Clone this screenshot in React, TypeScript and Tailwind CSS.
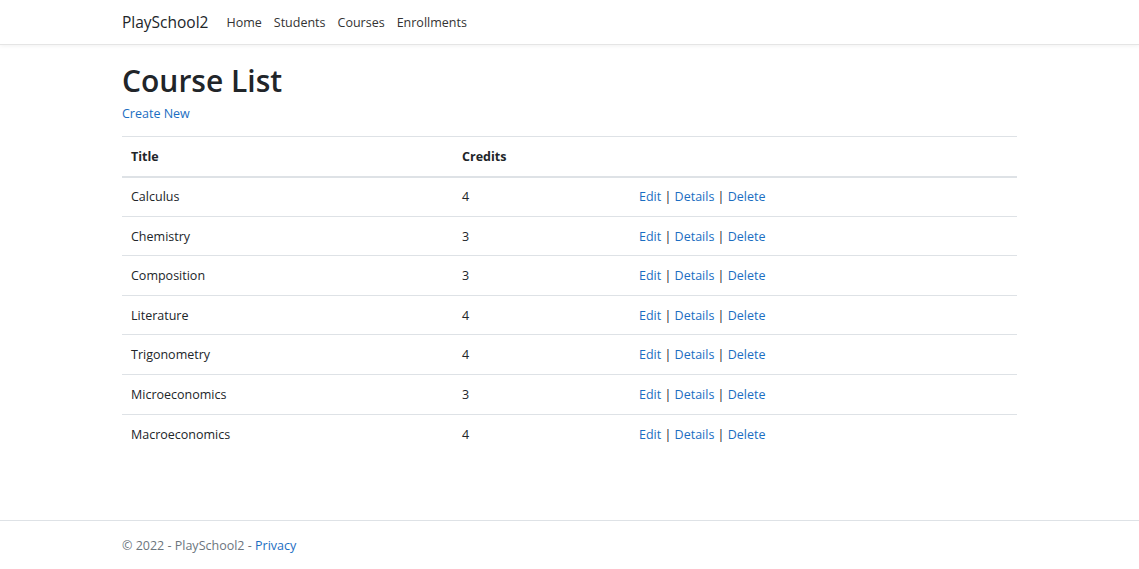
const courses = [
  { title: "Calculus", credits: 4 },
  { title: "Chemistry", credits: 3 },
  { title: "Composition", credits: 3 },
  { title: "Literature", credits: 4 },
  { title: "Trigonometry", credits: 4 },
  { title: "Microeconomics", credits: 3 },
  { title: "Macroeconomics", credits: 4 },
];

export default function App() {
  return (
    <div className="flex min-h-[569px] flex-col bg-white text-[12.5px] text-[#212529] [font-family:'Open_Sans',sans-serif]">
      <header className="h-[45px] border-b border-[#e5e5e5] shadow-[0_1px_4px_rgba(0,0,0,0.06)]">
        <nav className="mx-auto flex h-full w-[895px] items-center pt-[2px]">
          <a className="mr-[18px] text-[15.5px] text-[#212529]">PlaySchool2</a>
          <div className="flex gap-[12px] text-[12.5px] text-[#333]">
            <a>Home</a>
            <a>Students</a>
            <a>Courses</a>
            <a>Enrollments</a>
          </div>
        </nav>
      </header>

      <main className="mx-auto w-[895px] flex-1">
        <h1 className="mt-[17px] text-[30px] font-semibold leading-[38px] text-[#212529]">Course List</h1>
        <p className="mt-[5px] leading-[18px]">
          <a className="text-[#1b6ec2]">Create New</a>
        </p>
        <table className="mt-[13px] w-full border-collapse">
          <thead>
            <tr className="border-t border-b-2 border-t-[#dee2e6] border-b-[#dee2e6]">
              <th className="h-[40px] w-[331px] px-[9px] pt-[2px] text-left font-bold">Title</th>
              <th className="w-[177px] px-[9px] pt-[2px] text-left font-bold">Credits</th>
              <th></th>
            </tr>
          </thead>
          <tbody>
            {courses.map((c, i) => (
              <tr key={c.title} className={i > 0 ? "border-t border-[#dee2e6]" : ""}>
                <td className="h-[39.6px] px-[9px] pt-[2px]">{c.title}</td>
                <td className="px-[9px] pt-[2px]">{c.credits}</td>
                <td className="px-[9px] pt-[2px]">
                  <a className="text-[#1b6ec2]">Edit</a> |{" "}
                  <a className="text-[#1b6ec2]">Details</a> |{" "}
                  <a className="text-[#1b6ec2]">Delete</a>
                </td>
              </tr>
            ))}
          </tbody>
        </table>
      </main>

      <footer className="h-[49px] border-t border-[#dee2e6]">
        <div className="mx-auto flex h-full w-[895px] items-center pt-[3px] text-[#6c757d]">
          © 2022 - PlaySchool2 -&nbsp;<a className="text-[#1b6ec2]">Privacy</a>
        </div>
      </footer>
    </div>
  );
}
